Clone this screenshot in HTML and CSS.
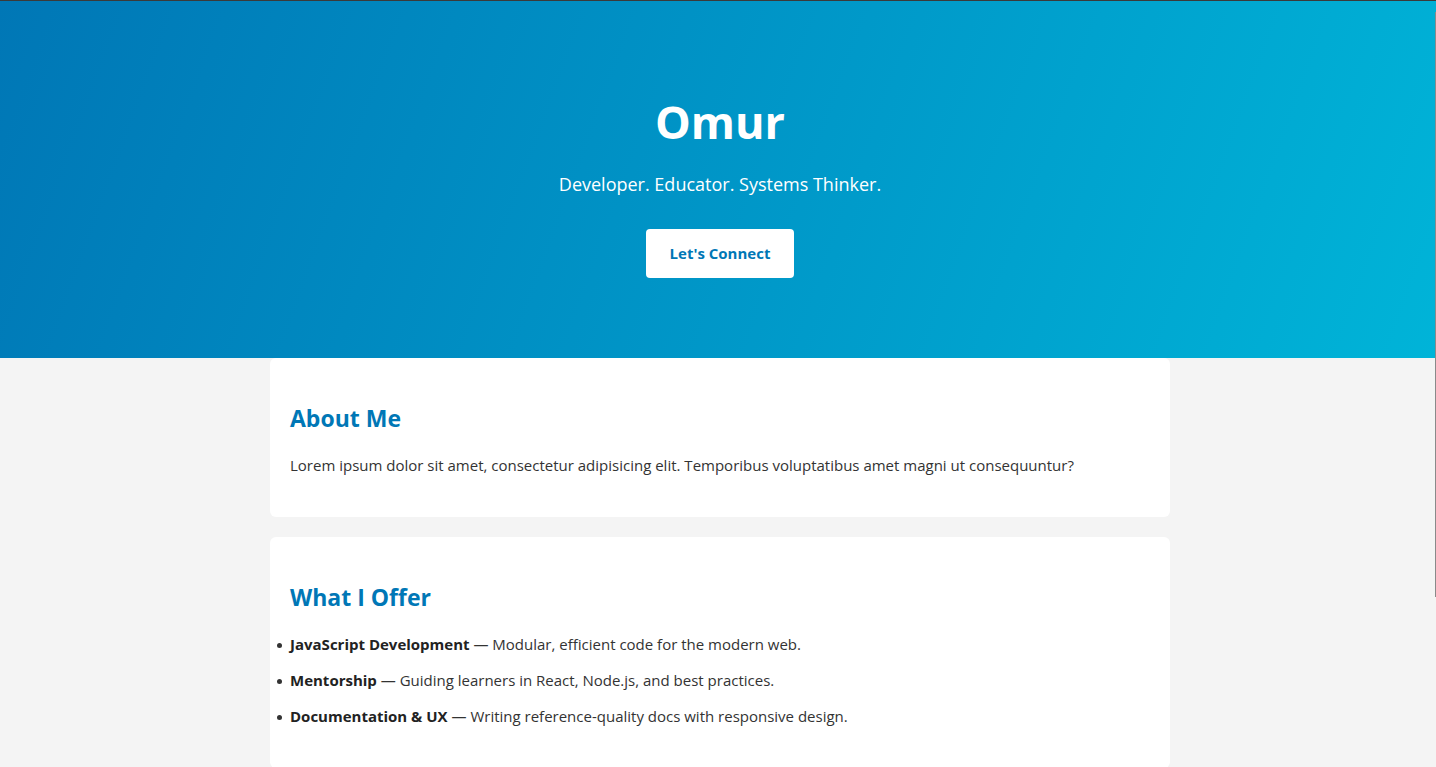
FILE: index.html
```html
<!DOCTYPE html>
<html lang="en">
<head>
<meta charset="utf-8">
<title>Omur</title>
<link rel="stylesheet" href="styles.css">
</head>
<body>
<header class="hero">
  <h1 class="hero-title">Omur</h1>
  <p class="hero-sub">Developer. Educator. Systems Thinker.</p>
  <a class="hero-btn" href="#">Let's Connect</a>
</header>
<main class="content">
  <section class="card">
    <h2 class="card-title">About Me</h2>
    <p class="card-text">Lorem ipsum dolor sit amet, consectetur adipisicing elit. Temporibus voluptatibus amet magni ut consequuntur?</p>
  </section>
  <section class="card">
    <h2 class="card-title">What I Offer</h2>
    <ul class="offer-list">
      <li><strong>JavaScript Development</strong> — Modular, efficient code for the modern web.</li>
      <li><strong>Mentorship</strong> — Guiding learners in React, Node.js, and best practices.</li>
      <li><strong>Documentation &amp; UX</strong> — Writing reference-quality docs with responsive design.</li>
    </ul>
  </section>
</main>
<div class="scroll-thumb"></div>
</body>
</html>
```
FILE: styles.css
```css
html {
  overflow-x: hidden;
}
html, body {
  margin: 0;
  padding: 0;
}
body {
  min-width: 1440px;
  background: #f4f4f4;
  color: #333;
  font-family: "Open Sans", "Noto Sans", sans-serif;
  border-top: 1px solid #3a3a3a;
}
.hero {
  background: linear-gradient(110deg, #0077b6 0%, #00b4d8 100%);
  color: #fff;
  text-align: center;
  padding: 60px 20px 80px;
  display: flex;
  flex-direction: column;
  align-items: center;
}
.hero-title {
  margin: 32px 0 0;
  font-size: 45px;
  line-height: 58px;
  font-weight: 700;
}
.hero-sub {
  margin: 21px 0 0;
  font-size: 18px;
  line-height: 24px;
}
.hero-btn {
  margin-top: 33px;
  background: #fff;
  color: #0077b6;
  text-decoration: none;
  font-weight: 700;
  font-size: 15px;
  line-height: 21px;
  padding: 14px 24px;
  border-radius: 4px;
}
.content {
  display: flex;
  flex-direction: column;
  align-items: center;
  gap: 20px;
}
.card {
  width: 900px;
  box-sizing: border-box;
  background: #fff;
  border-radius: 6px;
  padding: 24px 20px 20px;
}
.card-title {
  margin: 20px 0 0;
  color: #0077b6;
  font-size: 23px;
  line-height: 32px;
  font-weight: 700;
}
.card-text {
  margin: 19px 0 20px;
  font-size: 15px;
  line-height: 24px;
}
.offer-list {
  margin: 19px 0 20px;
  padding: 0;
  list-style: none;
  font-size: 15px;
  line-height: 24px;
}
.offer-list li {
  margin-bottom: 12px;
}
.offer-list li::before {
  content: "";
  display: inline-block;
  width: 5px;
  height: 5px;
  border-radius: 50%;
  background: #333;
  margin: 0 8px 0 -13px;
  vertical-align: middle;
}
.offer-list strong {
  color: #222;
}
.scroll-thumb {
  position: fixed;
  right: 0;
  top: 12px;
  width: 1px;
  height: 585px;
  background: #8a8a8a;
}
```
